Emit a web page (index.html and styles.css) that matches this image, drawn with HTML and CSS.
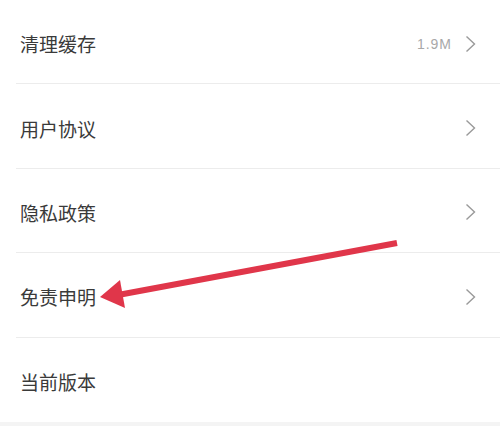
FILE: index.html
```html
<!DOCTYPE html>
<html lang="zh-CN">

<head>
    <meta charset="UTF-8">
    <meta name="viewport" content="width=device-width, initial-scale=1.0">
    <title>设置</title>
    <link rel="stylesheet" href="styles.css">
</head>

<body>

    <div class="list">
        <div class="item">
            <span class="label">清理缓存</span>
            <span class="value">1.9M</span>
            <svg class="chevron" viewBox="0 0 11 18"><path d="M1.5 1.5 L9.5 9 L1.5 16.5" /></svg>
        </div>
        <div class="item">
            <span class="label">用户协议</span>
            <svg class="chevron" viewBox="0 0 11 18"><path d="M1.5 1.5 L9.5 9 L1.5 16.5" /></svg>
        </div>
        <div class="item">
            <span class="label">隐私政策</span>
            <svg class="chevron" viewBox="0 0 11 18"><path d="M1.5 1.5 L9.5 9 L1.5 16.5" /></svg>
        </div>
        <div class="item">
            <span class="label">免责申明</span>
            <svg class="chevron" viewBox="0 0 11 18"><path d="M1.5 1.5 L9.5 9 L1.5 16.5" /></svg>
        </div>
        <div class="item last">
            <span class="label">当前版本</span>
        </div>
    </div>

    <div class="footer"></div>

    <!-- annotation arrow drawn over the list -->
    <svg class="arrow" viewBox="0 0 500 426">
        <line x1="397" y1="243" x2="118" y2="295" />
        <polygon points="100,297 120,280 125,308" />
    </svg>

</body>

</html>
```

FILE: styles.css
```css
body {
    margin: 0;
    font-family: "Noto Sans CJK SC", "Liberation Sans", sans-serif;
    background-color: #ffffff;
    width: 500px;
    height: 426px;
    overflow: hidden;
    position: relative;
}

.list {
    display: flex;
    flex-direction: column;
}

.item {
    height: 84.4px;
    box-sizing: border-box;
    display: flex;
    align-items: center;
    padding: 3px 0 0 20px;
    position: relative;
}

.item::after {
    content: "";
    position: absolute;
    left: 16px;
    right: 0;
    bottom: 0;
    height: 1px;
    background-color: #ececec;
}

.item.last::after {
    display: none;
}

.label {
    font-size: 19px;
    color: #3a3a3a;
    flex: 1;
}

.value {
    font-family: "Liberation Sans", sans-serif;
    font-size: 14px;
    letter-spacing: 1px;
    color: #a8a8a8;
    margin-right: 13px;
}

.chevron {
    width: 11px;
    height: 18px;
    margin-right: 24px;
    fill: none;
    stroke: #9a9a9a;
    stroke-width: 1.4;
}

.footer {
    height: 4px;
    background-color: #f4f4f4;
}

.arrow {
    position: absolute;
    left: 0;
    top: 0;
    width: 500px;
    height: 426px;
    pointer-events: none;
}

.arrow line {
    stroke: #e0364a;
    stroke-width: 6;
}

.arrow polygon {
    fill: #e0364a;
}
```
